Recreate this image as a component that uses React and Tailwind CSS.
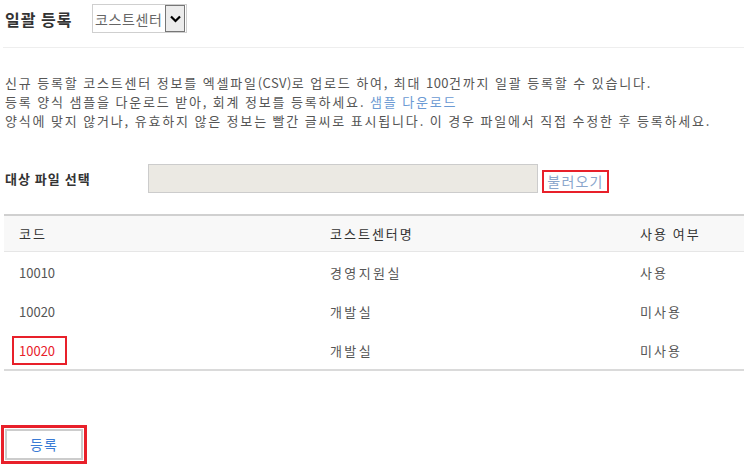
import { useState } from "react";

const rows = [
  { code: "10010", name: "경영지원실", use: "사용" },
  { code: "10020", name: "개발실", use: "미사용" },
  { code: "10020", name: "개발실", use: "미사용", invalid: true },
];

export default function App() {
  const [type] = useState("코스트센터");

  return (
    <div className="w-[744px] h-[466px] bg-white overflow-hidden text-[#555] font-['Noto_Sans_CJK_KR','Malgun_Gothic',sans-serif]">
      {/* title row */}
      <div className="flex items-center h-[36px] pl-[5px] pt-[1px]">
        <h1 className="text-[16px] font-bold text-[#333] w-[87px] tracking-[1px]">일괄 등록</h1>
        <div className="flex items-center h-[29px] w-[95px] border border-[#cfcfcf] pl-[2px]">
          <span className="text-[14px] text-[#666] w-[72px] leading-none tracking-[0.6px]">{type}</span>
          <div className="ml-auto mr-[1px] w-[20px] h-[27px] bg-[#ececec] border border-[#767676] flex items-center justify-center">
            <svg width="11" height="8" viewBox="0 0 11 8">
              <path d="M1 1.5 L5.5 6 L10 1.5" fill="none" stroke="#000" strokeWidth="2.2" />
            </svg>
          </div>
        </div>
      </div>

      <div className="ml-[3px] mt-[11px] border-t border-[#eeeeee]" />

      {/* description */}
      <div className="pl-[5px] mt-[25px] text-[13px] leading-[19px] text-[#555] tracking-[1.8px] whitespace-nowrap">
        <p>
          신규 등록할 코스트센터 정보를 엑셀파일<span className="tracking-[0.4px]">(CSV)</span>로 업로드 하여, 최대{" "}
          <span className="tracking-[0.4px]">100</span>건까지 일괄 등록할 수 있습니다.
        </p>
        <p>
          등록 양식 샘플을 다운로드 받아, 회계 정보를 등록하세요.{" "}
          <a className="text-[#6b9ad3]">샘플 다운로드</a>
        </p>
        <p>양식에 맞지 않거나, 유효하지 않은 정보는 빨간 글씨로 표시됩니다. 이 경우 파일에서 직접 수정한 후 등록하세요.</p>
      </div>

      {/* file select */}
      <div className="flex items-center pl-[5px] mt-[34px] h-[29px]">
        <span className="w-[143px] text-[13px] font-bold text-[#333] tracking-[1px]">대상 파일 선택</span>
        <div className="w-[390px] h-[29px] bg-[#ebe9e3] border border-[#cccccc]" />
        <button className="ml-[4px] mt-[5px] h-[23px] w-[67px] border-2 border-[#e8202a] text-[14px] text-[#8aa6cc] flex items-center justify-center tracking-[1.2px]">
          불러오기
        </button>
      </div>

      {/* table */}
      <div className="ml-[4px] mt-[21px] border-t-2 border-[#d0d0d0] border-b-2 border-b-[#dadada] text-[13px]">
        <div className="grid grid-cols-[311px_310px_1fr] h-[36px] items-center bg-[#f8f8f8] border-b border-[#e6e6e6] text-[#333] tracking-[2px]">
          <span className="pl-[15px]">코드</span>
          <span className="pl-[15px]">코스트센터명</span>
          <span className="pl-[15px]">사용 여부</span>
        </div>
        {rows.map((r, i) => (
          <div key={i} className="grid grid-cols-[311px_310px_1fr] h-[39px] items-center pt-[2px]">
            <span className="pl-[8px]">
              {r.invalid ? (
                <span className="inline-block border-2 border-[#e8202a] text-[#e8202a] px-[5px] h-[29px] leading-[25px] w-[55px]">{r.code}</span>
              ) : (
                <span className="pl-[7px]">{r.code}</span>
              )}
            </span>
            <span className="pl-[15px] tracking-[2.4px]">{r.name}</span>
            <span className="pl-[15px] tracking-[2px]">{r.use}</span>
          </div>
        ))}
      </div>

      {/* submit */}
      <div className="mt-[54px] pl-[1px]">
        <div className="inline-block border-[3px] border-[#e8202a] p-[1px]">
          <button className="w-[78px] h-[31px] border-2 border-[#cccccc] bg-white text-[14px] text-[#3a7bd5] tracking-[1px]">등록</button>
        </div>
      </div>
    </div>
  );
}
